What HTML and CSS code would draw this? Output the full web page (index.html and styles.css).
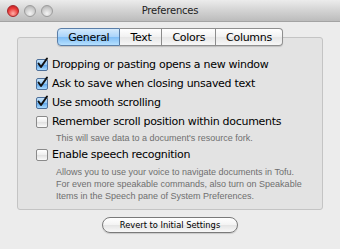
FILE: index.html
```html
<!DOCTYPE html>
<html lang="en">
<head>
    <meta charset="UTF-8">
    <meta name="viewport" content="width=device-width, initial-scale=1.0">
    <title>Preferences</title>
    <link rel="stylesheet" href="styles.css">
</head>
<body>
    <div class="window">
        <div class="titlebar">
            <div class="lights">
                <span class="light close"></span>
                <span class="light"></span>
                <span class="light"></span>
            </div>
            <div class="title">Preferences</div>
        </div>

        <div class="panel">
            <div class="tabs">
                <span class="tab selected">General</span>
                <span class="tab">Text</span>
                <span class="tab">Colors</span>
                <span class="tab">Columns</span>
            </div>

            <div class="options">
                <label class="option">
                    <span class="check on"><svg viewBox="0 0 12 12"><path d="M2.5 5.5 L5 9 L11 0.5" /></svg></span>
                    Dropping or pasting opens a new window
                </label>
                <label class="option">
                    <span class="check on"><svg viewBox="0 0 12 12"><path d="M2.5 5.5 L5 9 L11 0.5" /></svg></span>
                    Ask to save when closing unsaved text
                </label>
                <label class="option">
                    <span class="check on"><svg viewBox="0 0 12 12"><path d="M2.5 5.5 L5 9 L11 0.5" /></svg></span>
                    Use smooth scrolling
                </label>
                <label class="option">
                    <span class="check"></span>
                    Remember scroll position within documents
                </label>
                <p class="note">This will save data to a document's resource fork.</p>
                <label class="option">
                    <span class="check"></span>
                    Enable speech recognition
                </label>
                <p class="note multi">Allows you to use your voice to navigate documents in Tofu.<br>For even more speakable commands, also turn on Speakable<br>Items in the Speech pane of System Preferences.</p>
            </div>
        </div>

        <div class="actions">
            <button type="button">Revert to Initial Settings</button>
        </div>
    </div>
</body>
</html>
```

FILE: styles.css
```css
body {
    margin: 0;
    background-color: #ececec;
    font-family: "DejaVu Sans", sans-serif;
    color: #000;
}
.window {
    width: 340px;
    height: 249px;
    overflow: hidden;
}
.titlebar {
    height: 21px;
    display: grid;
    grid-template-columns: 1fr auto 1fr;
    align-items: center;
    background: linear-gradient(#ececec, #d3d3d3 50%, #bcbcbc);
    border-bottom: 1px solid #a3a3a3;
}
.lights {
    display: flex;
    gap: 5px;
    padding-left: 7px;
}
.light {
    width: 12px;
    height: 12px;
    border-radius: 50%;
    box-sizing: border-box;
    border: 1px solid #9c9c9c;
    background: radial-gradient(circle at 50% 75%, #f4f4f4, #c9c9c9 60%, #a9a9a9);
}
.light.close {
    border-color: #a3262a;
    background: radial-gradient(circle at 50% 75%, #ffb0a8, #ea3d3b 55%, #b8161a);
}
.title {
    font-size: 10px;
    letter-spacing: -0.2px;
    color: #222;
}
.panel {
    margin: 15px 17px 0;
    height: 173px;
    background-color: #e3e3e3;
    border: 1px solid #c4c4c4;
    border-radius: 3px;
    box-sizing: border-box;
}
.tabs {
    display: flex;
    justify-content: center;
    margin-top: -10px;
}
.tab {
    height: 18px;
    line-height: 17px;
    box-sizing: border-box;
    padding: 0 10px;
    font-size: 11px;
    letter-spacing: -0.3px;
    border: 1px solid #8f8f8f;
    border-left: none;
    background: linear-gradient(#ffffff, #f1f1f1 50%, #e6e6e6 51%, #f7f7f7);
    box-shadow: 0 1px 1px rgba(0, 0, 0, 0.15);
}
.tab:first-child {
    border-left: 1px solid #6a88ad;
    border-radius: 4px 0 0 4px;
}
.tab:last-child {
    border-radius: 0 4px 4px 0;
}
.tab.selected {
    border-color: #5a7ea8;
    background: linear-gradient(#d4eafc, #a9d3fa 50%, #7fbdf5 51%, #b6e0ff);
}
.options {
    padding: 9px 0 0 18px;
}
.option {
    display: flex;
    align-items: center;
    gap: 4px;
    height: 19px;
    font-size: 11px;
    letter-spacing: -0.3px;
    white-space: nowrap;
}
.check {
    width: 12px;
    height: 12px;
    box-sizing: border-box;
    border: 1px solid #8a8a8a;
    border-radius: 2px;
    background: linear-gradient(#ffffff, #eeeeee 50%, #e0e0e0 51%, #fafafa);
    flex-shrink: 0;
}
.check.on {
    border-color: #4d6f99;
    background: linear-gradient(#c6e3fb, #8fc6f5 50%, #5fa6ea 51%, #a8daff);
}
.check svg {
    display: block;
    width: 12px;
    height: 12px;
    margin: -2px 0 0 -1px;
    overflow: visible;
}
.check path {
    fill: none;
    stroke: #111;
    stroke-width: 2;
    stroke-linecap: round;
    stroke-linejoin: round;
}
.note {
    margin: 0;
    padding-left: 20px;
    font-family: "Liberation Sans Narrow", "Liberation Sans", sans-serif;
    font-size: 9px;
    line-height: 14px;
    color: #6f6f6f;
    white-space: nowrap;
}
.note.multi {
    line-height: 12px;
    margin-top: 2px;
}
.actions {
    display: flex;
    justify-content: center;
    margin-top: 7px;
}
button {
    width: 136px;
    height: 16px;
    padding: 0;
    font-family: "DejaVu Sans", sans-serif;
    font-size: 8.3px;
    color: #000;
    border: 1px solid #7a7a7a;
    border-radius: 8px;
    background: linear-gradient(#ffffff, #f3f3f3 50%, #e4e4e4 51%, #f8f8f8);
    box-shadow: 0 1px 1px rgba(0, 0, 0, 0.15);
}
```
